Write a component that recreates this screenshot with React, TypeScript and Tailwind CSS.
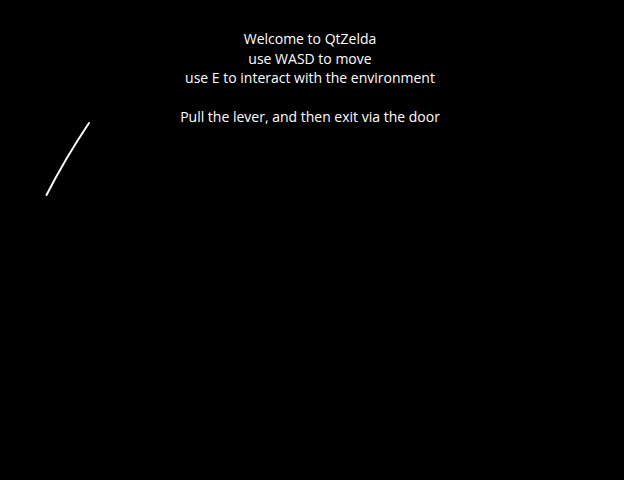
import React from "react";

export default function App() {
  return (
    <div className="relative w-[624px] h-[480px] bg-black overflow-hidden">
      <div
        className="w-[620px] pt-[29px] flex flex-col items-center text-white text-[14px] leading-[19.5px] text-center"
        style={{ fontFamily: '"Open Sans", "Noto Sans", sans-serif' }}
      >
        <div>Welcome to QtZelda</div>
        <div>use WASD to move</div>
        <div>use E to interact with the environment</div>
        <div>&nbsp;</div>
        <div>Pull the lever, and then exit via the door</div>
      </div>
      <svg className="absolute left-0 top-0" width="624" height="480">
        <path
          d="M89 123 Q65.5 158 46.5 195"
          stroke="white"
          strokeWidth="2"
          fill="none"
          strokeLinecap="round"
        />
      </svg>
    </div>
  );
}
